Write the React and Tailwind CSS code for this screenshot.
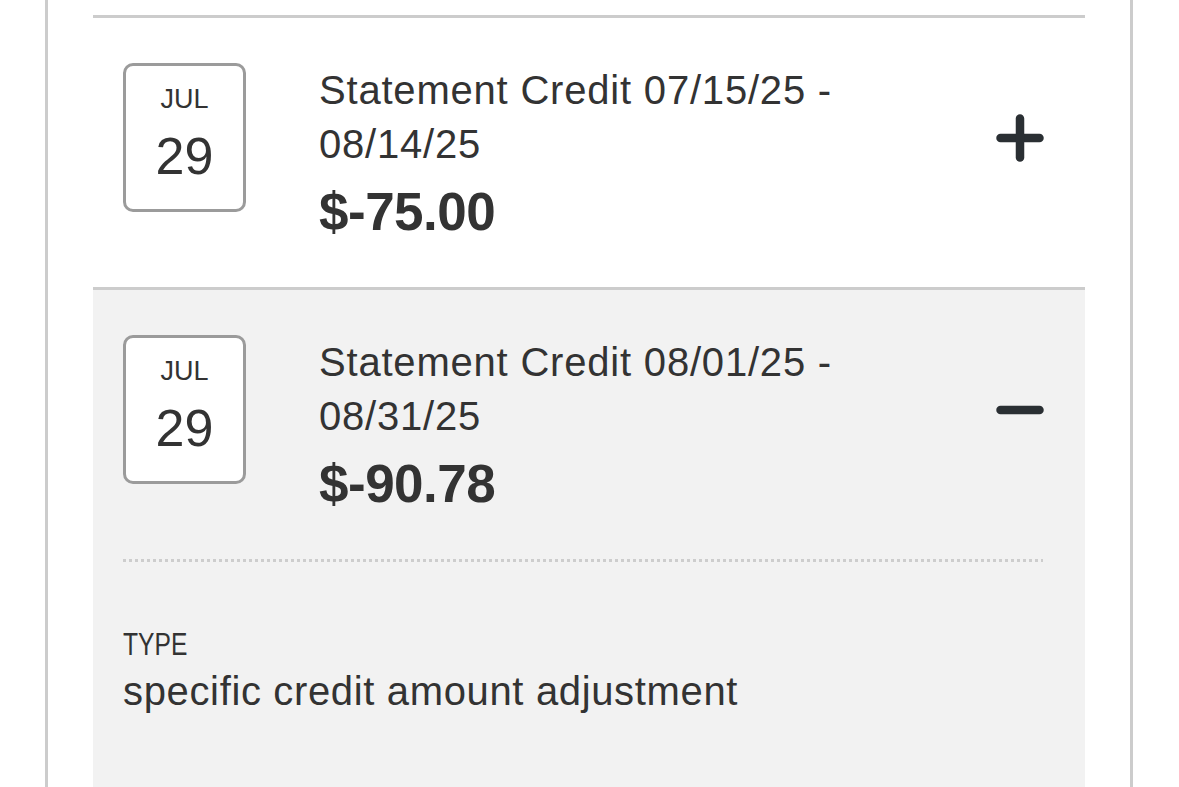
const rows = [
  { id: 1, month: 'JUL', day: '29', title: 'Statement Credit 07/15/25 - 08/14/25', amount: '$-75.00', open: false },
  {
    id: 2,
    month: 'JUL',
    day: '29',
    title: 'Statement Credit 08/01/25 - 08/31/25',
    amount: '$-90.78',
    open: true,
    details: [{ label: 'TYPE', value: 'specific credit amount adjustment' }],
  },
];

function ToggleIcon({ open }) {
  return (
    <svg width="48" height="48" viewBox="0 0 48 48" fill="none" stroke="#2a2f33" strokeWidth="8.5" strokeLinecap="round">
      <line x1="4.5" y1="24" x2="43.5" y2="24" />
      {!open && <line x1="24" y1="4.5" x2="24" y2="43.5" />}
    </svg>
  );
}

function DateBox({ month, day }) {
  return (
    <div className="w-[123px] h-[149px] shrink-0 rounded-[10px] border-[3px] border-[#9b9b9b] bg-white flex flex-col items-center pt-[16px]">
      <span className="text-[27px] leading-[34px] text-[#333]">{month}</span>
      <span className="text-[52px] leading-[58px] mt-[11px] text-[#333]">{day}</span>
    </div>
  );
}

function TransactionRow({ row }) {
  return (
    <div className={`border-t-[3px] border-[#cccccc] ${row.open ? 'bg-[#f2f2f2]' : 'bg-white'}`}>
      {/* en-tête de la ligne */}
      <div className="flex pl-[30px] pr-[41px] pt-[45px] pb-[44px]">
        <DateBox month={row.month} day={row.day} />
        <div className="ml-[73px] flex-1 min-w-0">
          <div className="max-w-[600px] text-[40px] leading-[54px] tracking-[0.8px] text-[#333]">{row.title}</div>
          <div className="mt-[10px] text-[53px] leading-[62px] font-bold tracking-[-0.5px] text-[#333]">{row.amount}</div>
        </div>
        <div className="h-[149px] flex items-center shrink-0">
          <ToggleIcon open={row.open} />
        </div>
      </div>

      {row.open && (
        <div className="pl-[30px] pr-[42px] pb-[70px]">
          <div className="h-[3px] bg-[repeating-linear-gradient(90deg,#cdcdcd_0px,#cdcdcd_3px,transparent_3px,transparent_6px)]" />
          <div className="pt-[62px]">
            {row.details.map((d) => (
              <div key={d.label}>
                <div className="text-[32px] leading-[40px] text-[#333]">
                  <span className="inline-block scale-x-[0.77] origin-left">{d.label}</span>
                </div>
                <div className="text-[40px] leading-[54px] tracking-[0.65px] text-[#333]">{d.value}</div>
              </div>
            ))}
          </div>
        </div>
      )}
    </div>
  );
}

export default function App() {
  return (
    <div className="w-[1179px] h-[787px] overflow-hidden bg-white" style={{ fontFamily: '"Liberation Sans", Arial, sans-serif' }}>
      <div className="ml-[45px] w-[1088px] min-h-[787px] border-x-[3px] border-[#cccccc] px-[45px] pt-[15px]">
        {rows.map((r) => (
          <TransactionRow key={r.id} row={r} />
        ))}
      </div>
    </div>
  );
}
